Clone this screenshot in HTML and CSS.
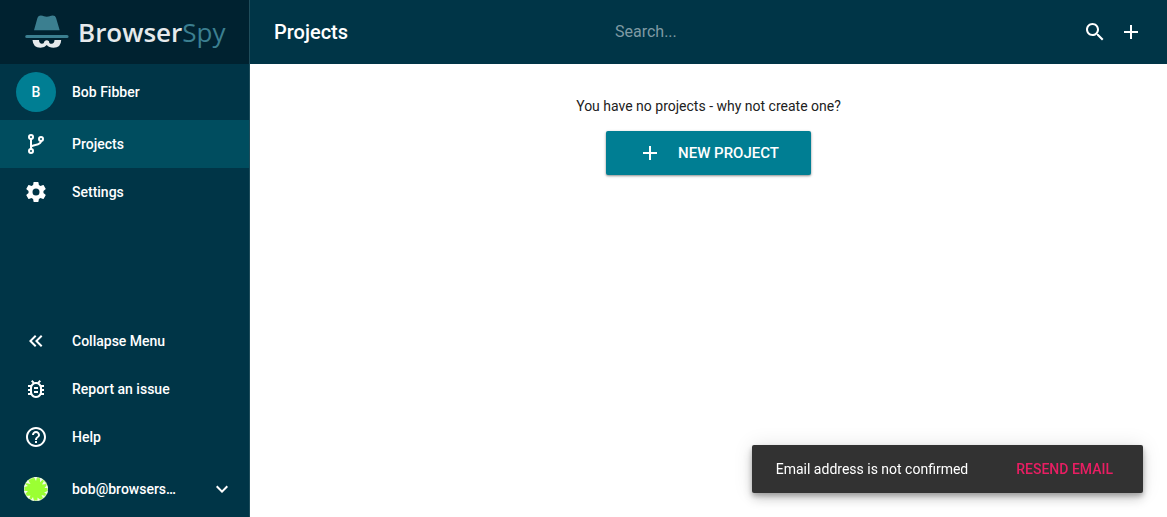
FILE: index.html
```html
<!DOCTYPE html>
<html lang="en">
<head>
<meta charset="utf-8">
<meta name="viewport" content="width=device-width, initial-scale=1">
<title>Projects - BrowserSpy</title>
<link rel="stylesheet" href="styles.css">
</head>
<body>
<div class="app">
  <aside class="sidebar">
    <a class="brand" href="#" aria-label="BrowserSpy">
      <svg class="brand-icon" viewBox="-1 0 45 34" aria-hidden="true">
        <path fill="#3b7f90" d="M9 15.200 12.500 2.800Q13.300.500 15.800.500C18.500.500 19.500 1.800 21.800 1.800S25.200.500 27.800.500Q30.300.500 31 2.800L34.700 15.200ZM1.800 20H42Q43.600 20 43.600 21.500T42 23H1.800Q.200 23 .200 21.500T1.800 20Z"/>
        <path fill="#e6eaec" d="M7.500 25H14Q14.200 28.800 17 28.800Q19 28.800 19.500 26.200Q21.800 24.200 24 26.200Q24 28.800 26.500 28.800Q29.300 28.800 29.500 25H36.200Q36 32.800 28.500 32.800Q24 32.800 21.800 30Q19.500 32.800 15.500 32.800Q8 32.800 7.500 25Z"/>
      </svg>
      <span class="brand-name">Browser<span class="brand-accent">Spy</span></span>
    </a>
    <nav class="menu">
      <a class="item item-tall" href="#"><span class="avatar">B</span><span class="label">Bob Fibber</span></a>
      <a class="item item-active" href="#" aria-current="page">
        <svg class="icon" viewBox="0 0 24 24"><g fill="none" stroke="#fff" stroke-width="2"><circle cx="7" cy="5" r="2"/><circle cx="7" cy="19" r="2"/><circle cx="17" cy="7" r="2"/><path d="M7 7v10M17 9c0 5-9 3-10 6"/></g></svg>
        <span class="label">Projects</span></a>
      <a class="item" href="#">
        <svg class="icon" viewBox="0 0 24 24"><path d="M12 15.500A3.500 3.500 0 0 1 8.500 12 3.500 3.500 0 0 1 12 8.500a3.500 3.500 0 0 1 3.500 3.500 3.500 3.500 0 0 1-3.500 3.500m7.430-2.530c.04-.32.07-.64.07-.97s-.03-.66-.07-1l2.110-1.630c.19-.15.24-.42.12-.64l-2-3.460c-.12-.22-.39-.31-.61-.22l-2.490 1c-.52-.39-1.060-.73-1.690-.98l-.37-2.650A.506.506 0 0 0 14 2h-4c-.25 0-.46.18-.5.42l-.37 2.650c-.63.25-1.170.59-1.690.98l-2.490-1c-.22-.09-.49 0-.61.22l-2 3.460c-.13.22-.07.49.12.64L4.570 11c-.04.34-.07.67-.07 1s.03.65.07.97l-2.110 1.660c-.19.15-.25.42-.12.64l2 3.460c.12.22.39.3.61.22l2.490-1.010c.52.4 1.060.74 1.690.99l.37 2.650c.04.24.25.42.5.42h4c.25 0 .46-.18.5-.42l.37-2.650c.63-.26 1.170-.59 1.690-.99l2.490 1.010c.22.08.49 0 .61-.22l2-3.460c.12-.22.07-.49-.12-.64z"/></svg>
        <span class="label">Settings</span></a>
    </nav>
    <div class="menu menu-bottom">
      <button class="item" type="button">
        <svg class="icon" viewBox="0 0 24 24"><path d="M18.410 7.410 17 6l-6 6 6 6 1.410-1.410L13.830 12zm-6 0L11 6l-6 6 6 6 1.410-1.410L7.830 12z"/></svg>
        <span class="label">Collapse Menu</span></button>
      <a class="item" href="#">
        <svg class="icon" viewBox="0 0 24 24"><path d="M20 8h-2.810c-.45-.78-1.070-1.450-1.820-1.960L17 4.410 15.590 3l-2.170 2.170C12.960 5.060 12.490 5 12 5s-.96.06-1.410.17L8.410 3 7 4.410l1.620 1.630C7.880 6.550 7.260 7.220 6.810 8H4v2h2.090c-.05.33-.09.66-.09 1v1H4v2h2v1c0 .34.04.67.09 1H4v2h2.810c1.040 1.790 2.970 3 5.190 3s4.150-1.210 5.190-3H20v-2h-2.090c.05-.33.09-.66.09-1v-1h2v-2h-2v-1c0-.34-.04-.67-.09-1H20zm-4 7c0 2.210-1.790 4-4 4s-4-1.790-4-4v-4c0-2.210 1.790-4 4-4s4 1.790 4 4zm-6-1h4v2h-4zm0-4h4v2h-4z"/></svg>
        <span class="label">Report an issue</span></a>
      <a class="item" href="#">
        <svg class="icon" viewBox="0 0 24 24"><path d="M11 18h2v-2h-2zm1-16C6.480 2 2 6.480 2 12s4.480 10 10 10 10-4.480 10-10S17.520 2 12 2m0 18c-4.410 0-8-3.590-8-8s3.590-8 8-8 8 3.590 8 8-3.590 8-8 8m0-14c-2.210 0-4 1.790-4 4h2c0-1.100.9-2 2-2s2 .9 2 2c0 2-3 1.750-3 5h2c0-2.250 3-2.500 3-5 0-2.210-1.790-4-4-4"/></svg>
        <span class="label">Help</span></a>
      <button class="item item-tall" type="button">
        <svg class="icon" viewBox="0 0 24 24"><circle cx="12" cy="12" r="12" fill="#c9f59a"/><circle cx="12" cy="12" r="11" fill="#9bff33"/><path fill="#f4f9ee" d="M10 0h3l-1 4ZM16 .700l3 1.500-3 3ZM20 4l2 3-4 .500ZM23 8l1 3-3.500 0ZM24 14l-1 3-3-1.500ZM21 19l-2 2-1.500-3ZM16.500 23l-3 1 0-3.500ZM10 24l-3-1 2-3ZM5 22l-2.500-3 4-.500ZM1 17l-1-3 4 0ZM0 10l1-3 3 2ZM2 6l2-3 2.500 4Z"/></svg>
        <span class="label">bob@browsers…</span>
        <svg class="icon" viewBox="0 0 24 24"><path d="M7.410 8.590 12 13.170l4.590-4.580L18 10l-6 6-6-6z"/></svg></button>
    </div>
  </aside>
  <div class="main">
    <header class="topbar">
      <h1 class="title">Projects</h1>
      <input class="search" type="search" placeholder="Search..." aria-label="Search">
      <div class="actions">
        <button class="icon-button" type="button" aria-label="Search projects"><svg class="icon" viewBox="0 0 24 24"><path d="M15.500 14h-.79l-.28-.27C15.410 12.590 16 11.110 16 9.500 16 5.910 13.090 3 9.500 3S3 5.910 3 9.500 5.910 16 9.500 16c1.610 0 3.090-.59 4.230-1.570l.27.28v.79l5 4.990L20.490 19zm-6 0C7.010 14 5 11.990 5 9.500S7.010 5 9.500 5 14 7.010 14 9.500 11.990 14 9.500 14"/></svg></button>
        <button class="icon-button" type="button" aria-label="Add project"><svg class="icon" viewBox="0 0 24 24"><path d="M19 13h-6v6h-2v-6H5v-2h6V5h2v6h6z"/></svg></button>
      </div>
    </header>
    <main class="content">
      <p class="message">You have no projects - why not create one?</p>
      <button class="new-project" type="button"><svg class="icon" viewBox="0 0 24 24"><path d="M19 13h-6v6h-2v-6H5v-2h6V5h2v6h6z"/></svg>New project</button>
    </main>
  </div>
</div>
<div class="snackbar" role="status">
  <span>Email address is not confirmed</span>
  <button class="snackbar-action" type="button">Resend email</button>
</div>
</body>
</html>
```
FILE: styles.css
```css
* { box-sizing: border-box; }

body {
  margin: 0;
  background: #fff;
  color: #212121;
  font-family: Roboto, "Noto Sans", sans-serif;
  font-size: 14px;
  line-height: 20px;
}

button, input {
  margin: 0;
  border: 0;
  background: none;
  color: inherit;
  font: inherit;
}

button { cursor: pointer; }
a { color: inherit; text-decoration: none; }

.app { display: flex; min-height: 100vh; }

.sidebar {
  display: flex;
  flex: none;
  flex-direction: column;
  width: 250px;
  border-right: 1px solid #1f4d5b;
  background: #003547;
  color: #fff;
}

.brand {
  display: flex;
  align-items: center;
  gap: 9px;
  height: 64px;
  padding: 0 16px 0 24px;
  background: #002230;
}

.brand-icon { flex: none; width: 45px; height: 34px; }

.brand-name {
  color: #e6eaec;
  font-family: "Open Sans", "Noto Sans", sans-serif;
  font-size: 26px;
  font-weight: 600;
  line-height: 32px;
}

.brand-accent { color: #3b7f90; font-weight: 500; }

.menu { display: flex; flex-direction: column; }
.menu-bottom { margin-top: auto; }

.item {
  display: flex;
  align-items: center;
  gap: 24px;
  width: 100%;
  min-height: 48px;
  padding: 0 15px 0 24px;
  font-weight: 500;
  text-align: left;
}

.item-tall { min-height: 56px; }
.item-active { background: #004d5f; }

.label {
  flex: 1;
  min-width: 0;
  overflow: hidden;
  text-overflow: ellipsis;
  white-space: nowrap;
}

.avatar {
  display: flex;
  flex: none;
  align-items: center;
  justify-content: center;
  width: 40px;
  height: 40px;
  margin: 0 -8px;
  border-radius: 50%;
  background: #007e93;
}

.icon { flex: none; width: 24px; height: 24px; fill: #fff; }

.main { display: flex; flex: 1; flex-direction: column; min-width: 0; }

.topbar {
  display: grid;
  grid-template-columns: 1fr auto 1fr;
  align-items: center;
  height: 64px;
  padding: 0 24px;
  background: #003547;
  color: #fff;
}

.title { margin: 0; font-size: 20px; font-weight: 500; line-height: 32px; }

.search { width: 187px; padding: 0; font-size: 16px; line-height: 24px; outline: 0; }
.search::placeholder { color: #7f9aa3; opacity: 1; }

.actions { display: flex; gap: 12px; justify-content: flex-end; }
.icon-button { display: flex; padding: 0; }

.content {
  display: flex;
  flex-direction: column;
  align-items: center;
  gap: 15px;
  padding: 32px 24px;
}

.message { margin: 0; }

.new-project {
  display: flex;
  align-items: center;
  gap: 16px;
  height: 44px;
  padding: 0 32px;
  border-radius: 2px;
  background: #007e93;
  box-shadow: 0 1px 3px rgba(0, 0, 0, .3), 0 1px 2px rgba(0, 0, 0, .2);
  color: #fff;
  font-size: 15px;
  font-weight: 500;
  text-transform: uppercase;
}

.snackbar {
  position: fixed;
  right: 24px;
  bottom: 24px;
  display: flex;
  align-items: center;
  gap: 48px;
  height: 48px;
  padding: 0 30px 0 24px;
  border-radius: 2px;
  background: #323232;
  box-shadow: 0 3px 5px rgba(0, 0, 0, .25), 0 6px 12px rgba(0, 0, 0, .16), 0 0 20px rgba(0, 0, 0, .1);
  color: #fff;
}

.snackbar-action {
  padding: 0;
  color: #e91e63;
  font-weight: 500;
  text-transform: uppercase;
}
```
